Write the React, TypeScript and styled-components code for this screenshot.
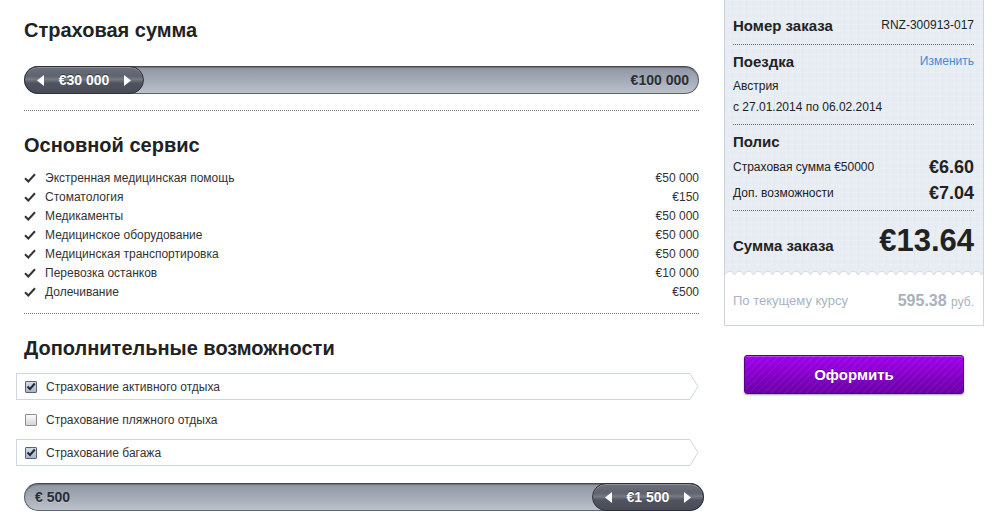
import React from "react";
import styled, { createGlobalStyle } from "styled-components";

const GlobalStyle = createGlobalStyle`
  html, body { margin: 0; padding: 0; background: #fff; }
  body { font-family: "Liberation Sans", Arial, sans-serif; color: #333; }
  * { box-sizing: border-box; }
`;

const Page = styled.div`
  display: flex;
  align-items: flex-start;
  gap: 25px;
  padding-left: 24px;
  width: 996px;
  height: 527px;
  overflow: hidden;
`;

const LeftCol = styled.div`
  width: 675px;
  padding-top: 18px;
  display: flex;
  flex-direction: column;
`;

const Heading = styled.h2<{ $mt?: number }>`
  margin: ${(p) => p.$mt ?? 0}px 0 0;
  font-size: 20px;
  line-height: 24px;
  font-weight: bold;
  color: #222;
`;

const Divider = styled.div<{ $mt: number }>`
  margin-top: ${(p) => p.$mt}px;
  border-top: 1px dotted #7a7a7a;
  height: 0;
`;

/* ---------- slider ---------- */
const Track = styled.div<{ $mt: number; $w: number }>`
  margin-top: ${(p) => p.$mt}px;
  width: ${(p) => p.$w}px;
  height: 28px;
  border-radius: 14px;
  border: 1px solid #5d626b;
  border-top-color: #464a52;
  background: linear-gradient(#8f96a3, #a7adb8 55%, #bcc2cb);
  box-shadow: inset 0 1px 1px rgba(0, 0, 0, 0.25);
  display: flex;
  align-items: center;
  justify-content: space-between;
`;

const TrackLabel = styled.span<{ $side: "left" | "right" }>`
  font-size: 14px;
  font-weight: bold;
  color: #2a2d33;
  padding: ${(p) => (p.$side === "left" ? "0 0 0 10px" : "0 9px 0 0")};
  text-shadow: 0 1px 0 rgba(255, 255, 255, 0.25);
`;

const Handle = styled.div<{ $w: number }>`
  width: ${(p) => p.$w}px;
  height: 28px;
  margin: -1px;
  border-radius: 14px;
  border: 1px solid #2c2f36;
  background: linear-gradient(
    #6c707b 0%,
    #5f636d 35%,
    #767a85 48%,
    #50545f 62%,
    #484c57 100%
  );
  box-shadow: inset 0 1px 0 rgba(255, 255, 255, 0.25);
  display: flex;
  align-items: center;
  justify-content: space-between;
  padding: 0 12px;
  color: #fff;
  font-size: 14px;
  font-weight: bold;
  text-shadow: 0 -1px 0 rgba(0, 0, 0, 0.45);
`;

const Arrow = ({ dir }: { dir: "l" | "r" }) => (
  <svg width="7" height="11" viewBox="0 0 7 11">
    {dir === "l" ? (
      <path d="M7 0 L0 5.5 L7 11 Z" fill="#fff" />
    ) : (
      <path d="M0 0 L7 5.5 L0 11 Z" fill="#fff" />
    )}
  </svg>
);

/* ---------- services ---------- */
const ServiceList = styled.ul`
  list-style: none;
  margin: 11px 0 0;
  padding: 0;
`;

const ServiceItem = styled.li`
  display: flex;
  align-items: center;
  height: 19px;
  font-size: 12px;
  color: #333;
`;

const CheckIcon = styled.span`
  width: 21px;
  display: inline-flex;
  align-items: center;
`;

const ServiceName = styled.span`
  flex: 1;
`;

const ServiceValue = styled.span`
  color: #333;
`;

/* ---------- options ---------- */
const OptionList = styled.div`
  margin-top: 13px;
  margin-left: -8px;
  display: flex;
  flex-direction: column;
  gap: 6px;
`;

const OptionRow = styled.label<{ $active: boolean }>`
  position: relative;
  width: 674px;
  height: 27px;
  display: flex;
  align-items: center;
  gap: 9px;
  padding-left: 8px;
  font-size: 12px;
  color: #333;
  border: 1px solid ${(p) => (p.$active ? "#cbd8e4" : "transparent")};
  border-right: none;
`;

const Chevron = styled.svg`
  position: absolute;
  left: 100%;
  top: -1px;
`;

const Box = styled.span<{ $checked: boolean }>`
  width: 12px;
  height: 12px;
  border: 1px solid ${(p) => (p.$checked ? "#5a6272" : "#8d8d8d")};
  border-radius: 1px;
  background: ${(p) =>
    p.$checked
      ? "linear-gradient(#d3dbe7, #a9b6cb)"
      : "linear-gradient(#fbfbfb, #d4d4d4)"};
  display: inline-flex;
  align-items: center;
  justify-content: center;
`;

/* ---------- right column ---------- */
const RightCol = styled.div`
  width: 260px;
  display: flex;
  flex-direction: column;
`;

const Receipt = styled.div`
  border: 1px solid #cdd5df;
  border-top: none;
  background: #fff;
`;

const ReceiptTop = styled.div`
  padding: 14px 9px 12px 8px;
  background-color: #e8edf4;
  background-image: repeating-linear-gradient(
      0deg,
      rgba(255, 255, 255, 0.12) 0px,
      rgba(255, 255, 255, 0.12) 1px,
      transparent 1px,
      transparent 6px
    ),
    repeating-linear-gradient(
      90deg,
      rgba(205, 214, 228, 0.12) 0px,
      rgba(205, 214, 228, 0.12) 1px,
      transparent 1px,
      transparent 7px
    );
`;

const Row = styled.div<{ $h: number; $mt?: number; $align?: string }>`
  display: flex;
  justify-content: space-between;
  align-items: ${(p) => p.$align ?? "center"};
  height: ${(p) => p.$h}px;
  margin-top: ${(p) => p.$mt ?? 0}px;
`;

const Title = styled.span<{ $size?: number }>`
  font-size: ${(p) => p.$size ?? 15}px;
  font-weight: bold;
  color: #222;
`;

const Small = styled.span`
  font-size: 12px;
  color: #222;
`;

const Link = styled.a`
  font-size: 12px;
  color: #3a8ddb;
  text-decoration: none;
`;

const Price = styled.span<{ $size: number }>`
  font-size: ${(p) => p.$size}px;
  font-weight: bold;
  color: #222;
  line-height: 1;
`;

const PanelDivider = styled.div<{ $mt: number }>`
  margin-top: ${(p) => p.$mt}px;
  border-top: 1px dotted #6b6b6b;
`;

const Wave = styled.svg`
  display: block;
  margin-top: -1px;
`;

const ReceiptBottom = styled.div`
  height: 49px;
  padding: 0 9px 0 8px;
  display: flex;
  align-items: center;
  justify-content: space-between;
  color: #aeb6c2;
`;

const Muted = styled.span<{ $size?: number }>`
  font-size: ${(p) => p.$size ?? 13}px;
  color: #aab3bf;
`;

const RubAmount = styled.span`
  font-size: 16px;
  font-weight: bold;
  color: #a9b1bd;
`;

const SubmitButton = styled.button`
  margin: 29px 20px 0;
  height: 39px;
  border: 1px solid #55008a;
  border-radius: 3px;
  background: repeating-linear-gradient(
      -45deg,
      rgba(255, 255, 255, 0.04) 0px,
      rgba(255, 255, 255, 0.04) 2px,
      transparent 2px,
      transparent 5px
    ),
    linear-gradient(#a100ec, #8500c8 50%, #6b00a6);
  box-shadow: 0 1px 2px rgba(0, 0, 0, 0.35), inset 0 1px 0 rgba(255, 255, 255, 0.25);
  color: #fff;
  font-family: "Liberation Sans", Arial, sans-serif;
  font-size: 15px;
  font-weight: bold;
  text-shadow: 0 -1px 0 rgba(0, 0, 0, 0.35);
  cursor: pointer;
`;

const services: [string, string][] = [
  ["Экстренная медицинская помощь", "€50 000"],
  ["Стоматология", "€150"],
  ["Медикаменты", "€50 000"],
  ["Медицинское оборудование", "€50 000"],
  ["Медицинская транспортировка", "€50 000"],
  ["Перевозка останков", "€10 000"],
  ["Долечивание", "€500"],
];

const options: [string, boolean][] = [
  ["Страхование активного отдыха", true],
  ["Страхование пляжного отдыха", false],
  ["Страхование багажа", true],
];

const Tick = () => (
  <svg width="12" height="10" viewBox="0 0 12 10">
    <path d="M1 5.2 L4.3 8.5 L11 1.2" stroke="#333" strokeWidth="2" fill="none" />
  </svg>
);

const BoxTick = () => (
  <svg width="10" height="9" viewBox="0 0 10 9">
    <path d="M1.5 4.5 L4 7 L8.8 1.5" stroke="#1f2735" strokeWidth="2" fill="none" />
  </svg>
);

export default function App() {
  return (
    <>
      <GlobalStyle />
      <Page>
        <LeftCol>
          <Heading>Страховая сумма</Heading>
          <Track $mt={24} $w={675}>
            <Handle $w={120}>
              <Arrow dir="l" />
              <span>€30 000</span>
              <Arrow dir="r" />
            </Handle>
            <TrackLabel $side="right">€100 000</TrackLabel>
          </Track>
          <Divider $mt={16} />

          <Heading $mt={22}>Основной сервис</Heading>
          <ServiceList>
            {services.map(([name, value]) => (
              <ServiceItem key={name}>
                <CheckIcon>
                  <Tick />
                </CheckIcon>
                <ServiceName>{name}</ServiceName>
                <ServiceValue>{value}</ServiceValue>
              </ServiceItem>
            ))}
          </ServiceList>
          <Divider $mt={12} />

          <Heading $mt={22}>Дополнительные возможности</Heading>
          <OptionList>
            {options.map(([name, checked]) => (
              <OptionRow key={name} $active={checked}>
                <Box $checked={checked}>{checked && <BoxTick />}</Box>
                <span>{name}</span>
                {checked && (
                  <Chevron width="9" height="27" viewBox="0 0 9 27">
                    <path d="M0 0.5 L8 13.5 L0 26.5" stroke="#cbd8e4" strokeWidth="1" fill="none" />
                  </Chevron>
                )}
              </OptionRow>
            ))}
          </OptionList>
          <Track $mt={17} $w={680}>
            <TrackLabel $side="left">€ 500</TrackLabel>
            <Handle $w={112}>
              <Arrow dir="l" />
              <span>€1 500</span>
              <Arrow dir="r" />
            </Handle>
          </Track>
        </LeftCol>

        <RightCol>
          <Receipt>
            <ReceiptTop>
              <Row $h={22}>
                <Title $size={15}>Номер заказа</Title>
                <Small>RNZ-300913-017</Small>
              </Row>
              <PanelDivider $mt={8} />
              <Row $h={22} $mt={5}>
                <Title>Поездка</Title>
                <Link href="#">Изменить</Link>
              </Row>
              <Row $h={21} $mt={3}>
                <Small>Австрия</Small>
              </Row>
              <Row $h={21}>
                <Small>с 27.01.2014 по 06.02.2014</Small>
              </Row>
              <PanelDivider $mt={7} />
              <Row $h={22} $mt={5}>
                <Title>Полис</Title>
              </Row>
              <Row $h={22} $mt={4}>
                <Small>Страховая сумма €50000</Small>
                <Price $size={18}>€6.60</Price>
              </Row>
              <Row $h={22} $mt={4}>
                <Small>Доп. возможности</Small>
                <Price $size={18}>€7.04</Price>
              </Row>
              <PanelDivider $mt={6} />
              <Row $h={34} $mt={14} $align="baseline">
                <Title>Сумма заказа</Title>
                <Price $size={31}>€13.64</Price>
              </Row>
            </ReceiptTop>
            <Wave width="258" height="6" viewBox="0 0 258 6">
              <defs>
                <pattern id="wv" width="9.5" height="6" patternUnits="userSpaceOnUse">
                  <rect width="9.5" height="6" fill="#fff" />
                  <path d="M0 5 Q2.4 0.5 4.75 1.2 Q7.1 0.5 9.5 5 L9.5 0 L0 0 Z" fill="#e8edf4" />
                  <path d="M0 5 Q2.4 0.5 4.75 1.2 Q7.1 0.5 9.5 5" stroke="#c9d1dc" strokeWidth="0.8" fill="none" />
                </pattern>
              </defs>
              <rect width="258" height="6" fill="url(#wv)" />
            </Wave>
            <ReceiptBottom>
              <Muted>По текущему курсу</Muted>
              <span>
                <RubAmount>595.38</RubAmount> <Muted $size={12}>руб.</Muted>
              </span>
            </ReceiptBottom>
          </Receipt>
          <SubmitButton>Оформить</SubmitButton>
        </RightCol>
      </Page>
    </>
  );
}
